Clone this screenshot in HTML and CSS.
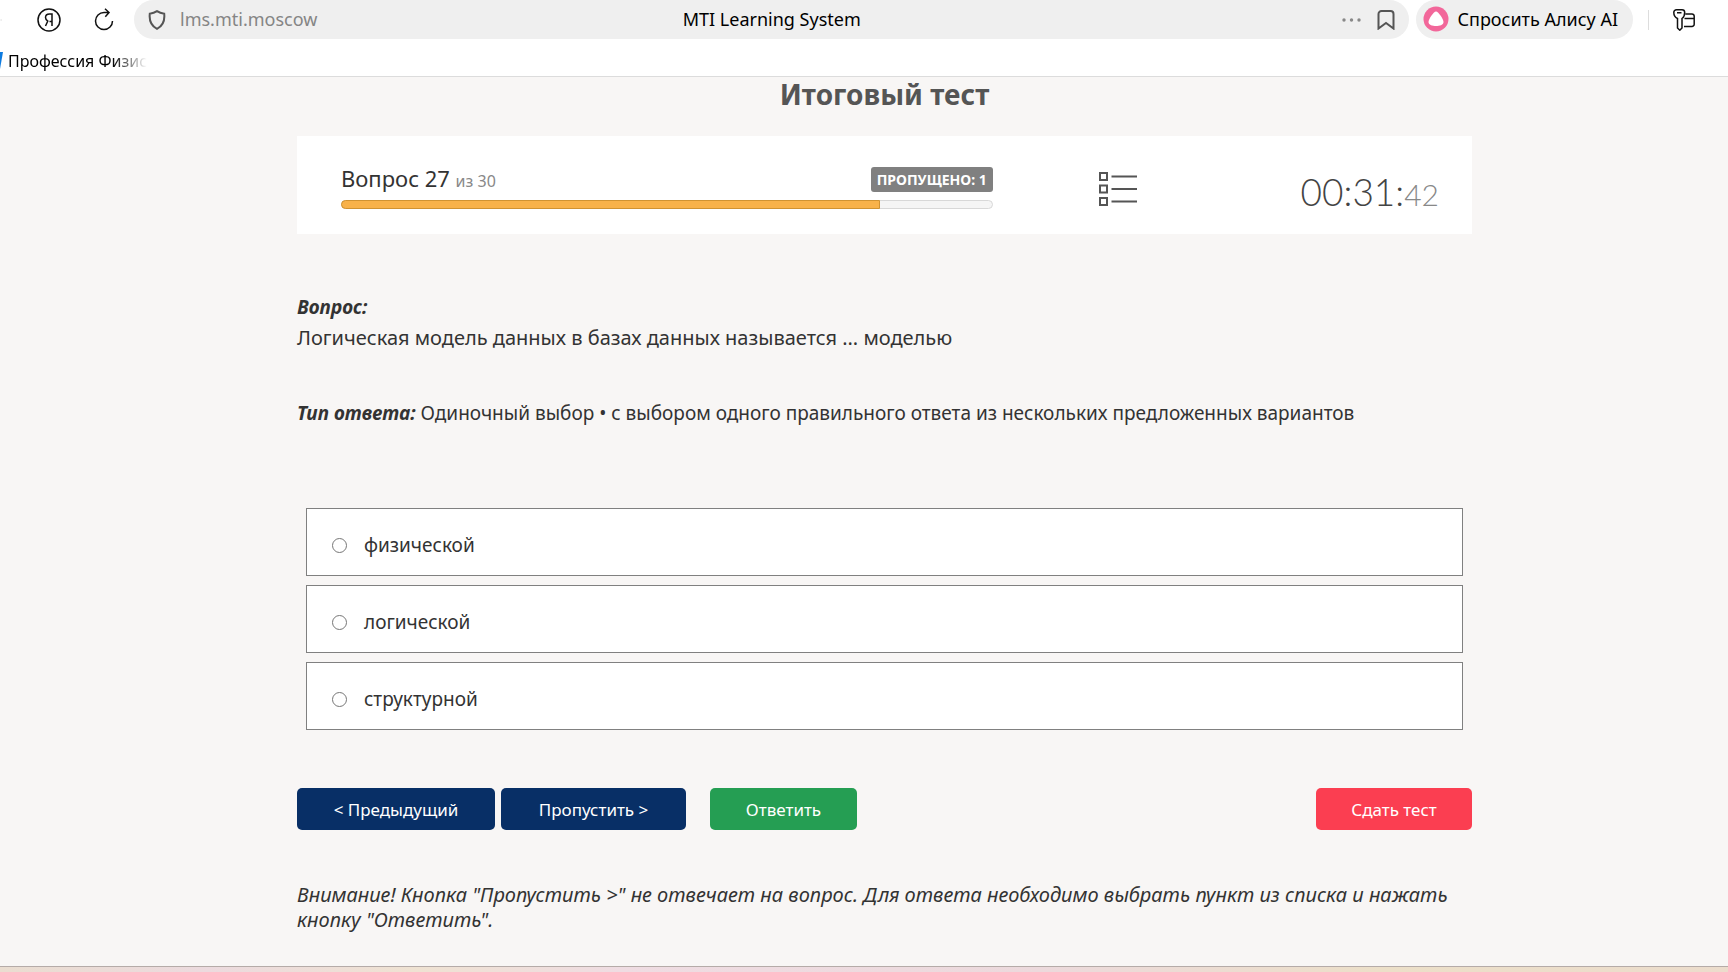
FILE: index.html
```html
<!DOCTYPE html>
<html lang="ru">
<head>
  <meta charset="UTF-8">
  <title>MTI Learning System</title>
  <link rel="stylesheet" href="styles.css">
</head>
<body>
  <header class="browser">
    <div class="toolbar">
      <button class="icon-btn back" aria-label="Назад">
        <svg width="20" height="24" viewBox="0 0 20 24"><path d="M4 12H20" /></svg>
      </button>
      <button class="icon-btn" aria-label="Яндекс">
        <svg width="24" height="24" viewBox="0 0 24 24"><circle cx="12" cy="12" r="11" /><path d="M15 18V6h-2.500c-2.500 0-4 1.400-4 3.500 0 1.700.8 2.600 2.300 3.600L8.500 18M12.500 13.500H15" /></svg>
      </button>
      <button class="icon-btn reload" aria-label="Обновить">
        <svg width="24" height="24" viewBox="0 0 24 24"><path d="M20.500 13a8.500 8.500 0 1 1-8.500-8.500h5M13 .8l4 3.700-3.700 4.200" /></svg>
      </button>
      <div class="address">
        <svg class="shield" width="18" height="20" viewBox="0 0 18 20"><path d="M9 1.200c2.300 1.500 4.700 2.200 7.200 2.500.7 6.200-1 12-7.200 15.100C2.800 15.700 1.100 9.900 1.800 3.700 4.300 3.400 6.700 2.700 9 1.200z" /></svg>
        <span class="domain">lms.mti.moscow</span>
        <span class="page-title">MTI Learning System</span>
        <button class="icon-btn dots" aria-label="Ещё">
          <svg width="20" height="6" viewBox="0 0 20 6"><circle cx="3" cy="3" r="1.700" /><circle cx="10.500" cy="3" r="1.700" /><circle cx="18" cy="3" r="1.700" /></svg>
        </button>
        <button class="icon-btn bookmark" aria-label="В закладки">
          <svg width="18" height="20" viewBox="0 0 18 20"><path d="M1.500 18.500V4a3 3 0 0 1 3-3h9a3 3 0 0 1 3 3v14.500L9 13z" /></svg>
        </button>
      </div>
      <button class="alice">
        <svg width="26" height="26" viewBox="0 0 26 26"><circle cx="13" cy="13" r="12.500" fill="#f2679a" /><path d="M13 5.500c2.500 0 7.500 8 7.500 10.500 0 3-4 4-7.500 4s-7.500-1-7.500-4c0-2.500 5-10.500 7.500-10.500z" fill="#fff" /></svg>
        Спросить Алису AI
      </button>
      <span class="divider"></span>
      <button class="icon-btn passwords" aria-label="Пароли">
        <svg width="22" height="22" viewBox="0 0 22 22"><path d="M3.500.8h5.500a2.700 2.700 0 0 1 2.700 2.700c0 2.600-.9 4.700-2.700 6v9.500L6.800 21.200 4.500 19V9.500C2.300 8.500.8 6.300.8 3.500A2.700 2.700 0 0 1 3.500.8zM4 3.800h4.500M12.500 5h6.500a2.200 2.200 0 0 1 2.200 2.200v8a2.200 2.200 0 0 1-2.200 2.200H11M11.500 9.500h9.700" /></svg>
      </button>
    </div>
    <nav class="bookmarks">
      <svg width="3" height="17" viewBox="0 0 3 17"><path d="M0 0h3L0 17z" fill="#0d7be0" /></svg>
      <a href="#">Профессия Физис</a>
    </nav>
  </header>

  <main class="test">
    <h1>Итоговый тест</h1>

    <section class="panel">
      <div class="progress-box">
        <div class="progress-head">
          <p class="counter">Вопрос 27 <small>из 30</small></p>
          <span class="badge">ПРОПУЩЕНО: 1</span>
        </div>
        <div class="progress" role="progressbar" aria-valuenow="83" aria-valuemin="0" aria-valuemax="100">
          <div class="progress-bar" style="width: 83%"></div>
        </div>
      </div>
      <button class="list-btn" aria-label="Список вопросов">
        <svg width="40" height="36" viewBox="0 0 40 36"><path d="M2 2h7v7H2zM2 14.500h7v7H2zM2 27h7v7H2zM13.500 5.500H39M13.500 18H39M13.500 30.500H39" /></svg>
      </button>
      <div class="timer">00:31:<span>42</span></div>
    </section>

    <section class="question">
      <p class="label">Вопрос:</p>
      <p class="question-text">Логическая модель данных в базах данных называется ... моделью</p>
      <p class="type"><b class="label">Тип ответа:</b> Одиночный выбор • с выбором одного правильного ответа из нескольких предложенных вариантов</p>
    </section>

    <form>
      <div class="options">
        <label class="option"><input type="radio" name="answer" value="1">физической</label>
        <label class="option"><input type="radio" name="answer" value="2">логической</label>
        <label class="option"><input type="radio" name="answer" value="3">структурной</label>
      </div>
      <div class="actions">
        <button type="button" class="btn prev">&lt; Предыдущий</button>
        <button type="button" class="btn skip">Пропустить &gt;</button>
        <button type="button" class="btn answer">Ответить</button>
        <button type="button" class="btn finish">Сдать тест</button>
      </div>
    </form>

    <p class="note">Внимание! Кнопка "Пропустить &gt;" не отвечает на вопрос. Для ответа необходимо выбрать пункт из списка и нажать кнопку "Ответить".</p>
  </main>

  <footer class="strip"></footer>
</body>
</html>
```
FILE: styles.css
```css
* { box-sizing: border-box; }
body {
  margin: 0;
  min-height: 100vh;
  display: flex;
  flex-direction: column;
  background: #f8f6f5;
  color: #333;
  font-family: "Noto Sans", "Open Sans", sans-serif;
  font-size: 20px;
}
h1, p { margin: 0; }
button {
  font-family: inherit;
  border: none;
  cursor: pointer;
}

/* browser bar */
.browser {
  background: #fff;
  border-bottom: 1px solid #dcdcdc;
  color: #000;
}
.toolbar {
  display: flex;
  align-items: center;
  height: 39px;
}
.icon-btn {
  display: flex;
  padding: 0;
  background: none;
}
.icon-btn svg, .shield {
  fill: none;
  stroke: #111;
  stroke-width: 1.5;
}
.back {
  width: 2px;
  margin-right: 35px;
  overflow: hidden;
  justify-content: flex-end;
}
.reload { margin: 0 18px 0 31px; }
.address {
  flex: 1;
  position: relative;
  display: flex;
  align-items: center;
  height: 39px;
  padding: 0 14px;
  background: #efefef;
  border-radius: 20px;
}
.address .shield, .bookmark svg {
  stroke: #555;
  stroke-width: 2;
}
.domain, .page-title, .alice {
  padding-bottom: 2px;
  font-size: 18px;
}
.domain {
  flex: 1;
  margin-left: 14px;
  color: #858585;
}
.page-title {
  position: absolute;
  left: 0;
  right: 0;
  text-align: center;
  pointer-events: none;
}
.dots { margin-right: 16px; }
.dots svg {
  fill: #888;
  stroke: none;
}
.alice {
  display: flex;
  align-items: center;
  gap: 8px;
  height: 39px;
  margin-left: 7px;
  padding: 0 15px 2px 7px;
  background: #efefef;
  border-radius: 20px;
}
.divider {
  width: 1px;
  height: 20px;
  margin: 0 24px 0 15px;
  background: #ddd;
}
.passwords { margin-right: 33px; }
.bookmarks {
  display: flex;
  align-items: center;
  gap: 5px;
  height: 37px;
  padding-top: 6px;
  font-size: 16px;
}
.bookmarks a {
  white-space: nowrap;
  color: #000;
  text-decoration: none;
  -webkit-mask-image: linear-gradient(to right, #000 75%, transparent);
  mask-image: linear-gradient(to right, #000 75%, transparent);
}

/* test */
.test {
  flex: 1;
  padding: 0 256px 0 297px;
}
h1 {
  padding-bottom: 25px;
  color: #555;
  font-size: 28px;
  line-height: 34px;
  text-align: center;
}
.panel {
  display: flex;
  align-items: center;
  height: 98px;
  padding: 0 33px 0 44px;
  background: #fff;
}
.progress-box { width: calc(60% - 7px); }
.progress-head {
  display: flex;
  justify-content: space-between;
  align-items: center;
}
.counter {
  font-size: 22px;
  line-height: 32px;
}
.counter small {
  color: #888;
  font-size: 16px;
}
.badge {
  padding: 0 6px;
  background: #808080;
  border-radius: 3px;
  color: #fff;
  font-size: 14px;
  font-weight: bold;
  line-height: 25px;
}
.progress {
  height: 9px;
  margin-top: 3px;
  background: #f5f5f5;
  border: 1px solid #d8d8d8;
  border-radius: 5px;
}
.progress-bar {
  height: 9px;
  margin: -1px;
  background: #f8b24a;
  border: 1px solid #d09332;
  border-radius: 5px 0 0 5px;
}
.list-btn {
  display: flex;
  margin-left: 105px;
  padding: 7px 0 0;
  background: none;
}
.list-btn svg {
  fill: none;
  stroke: #555;
  stroke-width: 2;
}
.timer {
  margin-left: auto;
  padding-top: 16px;
  color: #444;
  font-family: Lato, sans-serif;
  font-size: 37px;
  font-weight: 300;
  line-height: 48px;
}
.timer span {
  color: #888;
  font-size: 30px;
}

.question { padding-top: 58px; }
.label {
  font-size: 19px;
  font-style: italic;
  font-weight: bold;
  line-height: 30px;
}
.question-text { line-height: 32px; }
.type {
  margin-top: 44px;
  font-size: 19px;
  line-height: 30px;
}

.options {
  display: flex;
  flex-direction: column;
  gap: 9px;
  padding: 80px 9px 58px;
}
.option {
  display: flex;
  align-items: center;
  height: 68px;
  padding: 6px 25px 0;
  background: #fff;
  border: 1px solid #808080;
  font-size: 19px;
}
.option input {
  width: 15px;
  height: 15px;
  margin: 0 17px 0 0;
}
.actions {
  display: flex;
  gap: 6px;
}
.btn {
  height: 42px;
  border-radius: 5px;
  color: #fff;
  font-size: 17px;
}
.prev, .skip { background: #082f66; }
.prev { width: 198px; }
.skip { width: 185px; }
.answer {
  width: 147px;
  margin-left: 18px;
  background: #259e53;
}
.finish {
  width: 156px;
  margin-left: auto;
  background: #fb3e51;
}
.note {
  padding-top: 52px;
  font-size: 20px;
  font-style: italic;
  line-height: 25px;
}
.strip {
  height: 6px;
  border-top: 1px solid #b5aba8;
  background: linear-gradient(to right, #eaddd0, #ecdade 12%, #efe2d2 24%, #efdce2 36%, #ecd9dc 60%, #ecdfc8 80%, #ecdccc);
}
```
